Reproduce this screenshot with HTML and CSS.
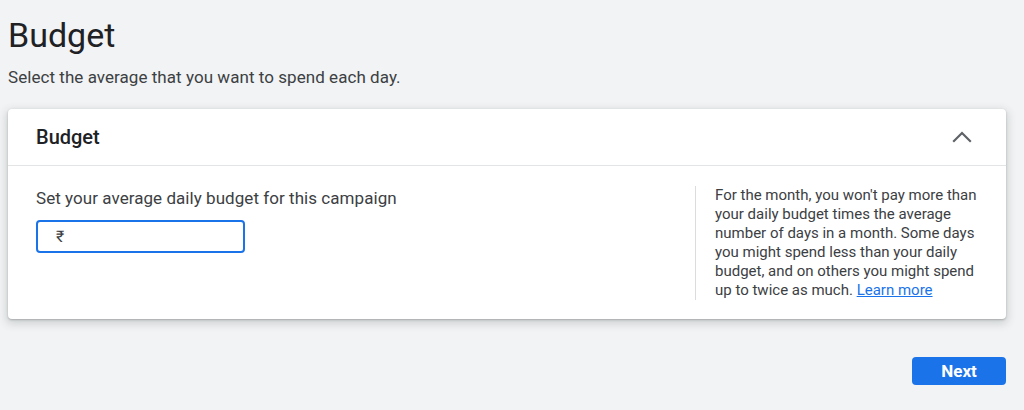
FILE: index.html
```html
<!DOCTYPE html>
<html lang="en">
<head>
<meta charset="utf-8">
<title>Budget</title>
<link rel="stylesheet" href="styles.css">
</head>
<body>
<main class="page">
  <h1 class="page-title">Budget</h1>
  <p class="page-subtitle">Select the average that you want to spend each day.</p>

  <section class="card">
    <header class="card-header">
      <h2 class="card-title">Budget</h2>
      <svg class="chevron" width="20" height="12" viewBox="0 0 20 12" aria-hidden="true">
        <path d="M1.2 10.8 L10 2 L18.8 10.8" fill="none" stroke="#5f6368" stroke-width="2.2"/>
      </svg>
    </header>
    <div class="card-body">
      <div class="budget-input-col">
        <label class="field-label" for="budget">Set your average daily budget for this campaign</label>
        <div class="money-field">
          <span class="currency">₹</span>
          <input id="budget" class="money-input" type="text">
        </div>
      </div>
      <aside class="help">
        For the month, you won't pay more than your daily budget times the average number of days in a month. Some days you might spend less than your daily budget, and on others you might spend up to twice as much. <a href="#" class="link">Learn more</a>
      </aside>
    </div>
  </section>

  <div class="actions">
    <button class="btn-primary" type="button">Next</button>
  </div>
</main>
</body>
</html>
```

FILE: styles.css
```css
* { box-sizing: border-box; }

html, body {
  margin: 0;
  padding: 0;
  background: #f1f3f4;
  font-family: Roboto, "Liberation Sans", Arial, sans-serif;
  color: #3c4043;
}

.page {
  padding: 15px 18px 0 8px;
}

.page-title {
  margin: 0;
  font-size: 34px;
  line-height: 40px;
  font-weight: 400;
  color: #202124;
}

.page-subtitle {
  margin: 10px 0 0;
  font-size: 17px;
  line-height: 24px;
  letter-spacing: 0.05px;
  color: #3c4043;
}

.card {
  margin-top: 20px;
  background: #fff;
  border-radius: 4px;
  box-shadow: 0 1px 2px rgba(60,64,67,0.3), 0 3px 8px 2px rgba(60,64,67,0.18);
}

.card-header {
  height: 57px;
  display: flex;
  align-items: center;
  justify-content: space-between;
  padding: 0 34px 0 28px;
  border-bottom: 1px solid #e3e4e6;
}

.card-title {
  margin: 0;
  font-size: 20px;
  font-weight: 500;
  color: #202124;
}

.chevron { display: block; }

.card-body {
  display: flex;
  padding: 20px 28px 19px 28px;
}

.budget-input-col {
  flex: 1;
}

.field-label {
  display: block;
  font-size: 17px;
  line-height: 24px;
  letter-spacing: 0.05px;
  color: #3c4043;
}

.money-field {
  margin-top: 10px;
  width: 209px;
  height: 33px;
  border: 2px solid #1a73e8;
  border-radius: 4px;
  display: flex;
  align-items: center;
  padding-left: 18px;
}

.currency {
  font-size: 16px;
  color: #3c4043;
}

.money-input {
  flex: 1;
  min-width: 0;
  border: 0;
  outline: none;
  background: transparent;
  font: inherit;
}

.help {
  width: 284px;
  margin-right: -1px;
  border-left: 1px solid #dadce0;
  padding-left: 19px;
  font-size: 15px;
  line-height: 19px;
  color: #3c4043;
}

.link {
  color: #1a73e8;
  text-decoration: underline;
}

.actions {
  display: flex;
  justify-content: flex-end;
  margin-top: 38px;
}

.btn-primary {
  width: 94px;
  height: 28px;
  border: 0;
  border-radius: 4px;
  background: #1a73e8;
  color: #fff;
  font-family: inherit;
  font-size: 17px;
  font-weight: 700;
}
```
